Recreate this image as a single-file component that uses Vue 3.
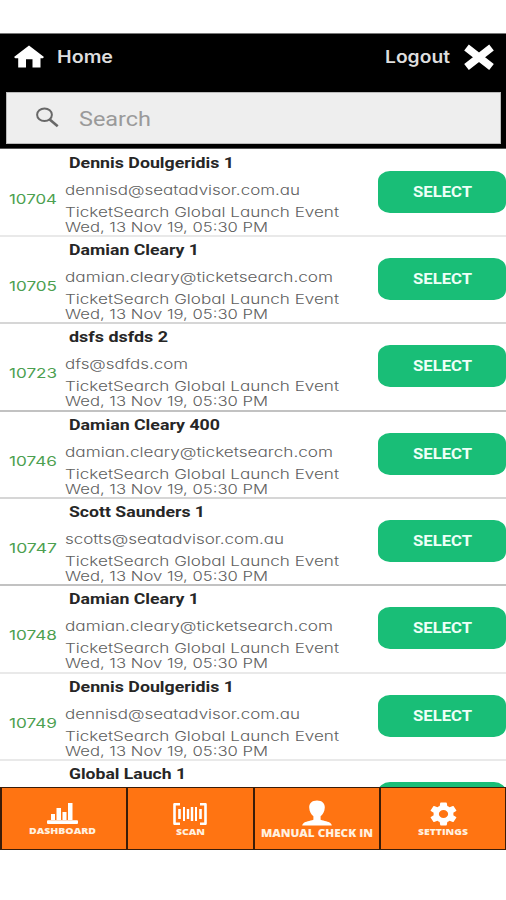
<script setup>
import { h } from 'vue'

// A single line of wide-set text, fitted to a given width.
const WideText = (props) =>
  h('svg', { width: props.w, height: props.h, class: 'wide-text' }, [
    h('text', { x: 0, y: props.base, textLength: props.w, lengthAdjust: 'spacingAndGlyphs' }, props.text)
  ])
WideText.props = ['text', 'w', 'h', 'base']

const damian = ['damian.cleary@ticketsearch.com', 268]
const dennis = ['dennisd@seatadvisor.com.au', 235]
const rows = [
  { id: '10704', name: 'Dennis Doulgeridis 1', nw: 165, mail: dennis, line: 'light' },
  { id: '10705', name: 'Damian Cleary 1', nw: 130, mail: damian, line: 'mid' },
  { id: '10723', name: 'dsfs dsfds 2', nw: 99, mail: ['dfs@sdfds.com', 123], line: 'dark' },
  { id: '10746', name: 'Damian Cleary 400', nw: 151, mail: damian, line: 'mid' },
  { id: '10747', name: 'Scott Saunders 1', nw: 136, mail: ['scotts@seatadvisor.com.au', 219], line: 'dark' },
  { id: '10748', name: 'Damian Cleary 1', nw: 130, mail: damian, line: 'light' },
  { id: '10749', name: 'Dennis Doulgeridis 1', nw: 165, mail: dennis, line: 'light' },
  { id: '', name: 'Global Lauch 1', nw: 117, mail: null, line: 'light' }
]
</script>

<template>
  <div class="screen">
    <header class="top">
      <div class="bar">
        <svg class="home" width="30" height="24" viewBox="0 0 30 24">
          <path d="M15 0.5 30 12l-1.2 1.2h-2.3V22.5h-8v-8.3h-6.5v8.3H4.2v-9.3H1.3L0 12Z" fill="#fff" />
        </svg>
        <WideText class="nav" text="Home" :w="56" :h="24" :base="17.5" />
        <WideText class="nav logout" text="Logout" :w="65" :h="24" :base="17.5" />
        <svg class="close" width="32" height="28" viewBox="0 0 32 28">
          <path d="M3.500 4.500 28.500 24M28.500 4.500 3.500 24" stroke="#fff" stroke-width="7.500" />
        </svg>
      </div>
      <div class="search">
        <svg width="24" height="22" viewBox="0 0 24 22" fill="none" stroke="#686868">
          <ellipse cx="8.500" cy="7.800" rx="7.400" ry="6.300" stroke-width="2" />
          <path d="M13.700 12.500 21.700 19.200" stroke-width="2.700" />
        </svg>
        <WideText class="placeholder" text="Search" :w="72" :h="24" :base="19.5" />
      </div>
    </header>

    <main class="list">
      <article v-for="r in rows" :key="r.id" class="row" :class="r.line">
        <div class="id"><WideText v-if="r.id" :text="r.id" :w="48" :h="16" :base="12" /></div>
        <div class="info">
          <WideText class="name" :text="r.name" :w="r.nw" :h="24" :base="18" />
          <template v-if="r.mail">
            <WideText :text="r.mail[0]" :w="r.mail[1]" :h="26" :base="20.5" />
            <WideText text="TicketSearch Global Launch Event" :w="274" :h="18" :base="16.8" />
            <WideText text="Wed, 13 Nov 19, 05:30 PM" :w="203" :h="18" :base="14" />
          </template>
        </div>
        <button class="select"><WideText v-if="r.id" text="SELECT" :w="59" :h="20" :base="15.2" /></button>
      </article>
    </main>

    <nav class="tabs">
      <div class="tab dashboard">
        <svg width="32" height="24" viewBox="0 0 32 24" fill="#fff">
          <path d="M4 13h4v6H4ZM9.5 7h4.500v12H9.500ZM15.500 11h4v8h-4ZM21 2h4.500v17H21Z" />
          <rect x="0" y="19.300" width="31" height="3.700" rx="1" />
        </svg>
        <WideText text="DASHBOARD" :w="67" :h="12" :base="8" />
      </div>
      <div class="tab">
        <svg width="36" height="24" viewBox="0 0 36 24" fill="none" stroke="#fff">
          <path d="M8 2.200H2.500V21.800H8M28 2.200h5.500V21.800H28" stroke-width="2.600" stroke-linejoin="round" />
          <path d="M7.500 7v10M28.500 7v10" stroke-width="2.600" />
          <path d="M12 5v14M24 5v14" stroke-width="2" />
          <path d="M16 7v10M20 5v14" stroke-width="2.400" />
        </svg>
        <WideText text="SCAN" :w="29" :h="12" :base="8" />
      </div>
      <div class="tab manual">
        <svg width="30" height="26" viewBox="0 0 30 26" fill="#fff">
          <path d="M15 .5c5 0 8 2.800 7.800 7-.2 4.400-2 7-4.200 8.800v3.500c3.500 1.200 8.200 2 9.700 3.200 1 .8 1.400 1.800 1.500 2.500H.2c.1-.7.5-1.700 1.500-2.500 1.500-1.200 6.200-2 9.700-3.200v-3.500C9.200 14.500 7.400 11.900 7.200 7.500 7 3.300 10 .5 15 .5Z" />
        </svg>
        <WideText text="MANUAL CHECK IN" :w="112" :h="12" :base="9.8" />
      </div>
      <div class="tab settings">
        <svg width="27" height="24" viewBox="1.8 1.6 20.4 20.8" preserveAspectRatio="none">
          <path fill="#fff" d="M19.430 12.980c.040-.320.070-.640.070-.980s-.030-.660-.070-.980l2.110-1.650c.190-.150.240-.420.120-.640l-2-3.460c-.120-.220-.390-.300-.610-.220l-2.490 1c-.520-.400-1.080-.730-1.690-.980l-.380-2.650C14.460 2.180 14.250 2 14 2h-4c-.250 0-.460.180-.490.420l-.380 2.650c-.610.250-1.170.590-1.690.980l-2.490-1c-.230-.090-.490 0-.610.220l-2 3.460c-.130.220-.070.490.120.640l2.110 1.650c-.040.320-.070.650-.070.980s.030.660.070.980l-2.110 1.650c-.190.150-.240.420-.120.640l2 3.460c.120.220.390.300.610.220l2.490-1c.520.400 1.080.730 1.690.980l.380 2.650c.030.240.240.420.490.420h4c.250 0 .460-.180.490-.420l.380-2.650c.610-.250 1.170-.590 1.690-.980l2.490 1c.230.090.490 0 .610-.220l2-3.460c.120-.220.070-.490-.120-.640ZM12 15.500A3.500 3.500 0 1 1 12 8.500a3.500 3.500 0 0 1 0 7Z" />
        </svg>
        <WideText text="SETTINGS" :w="50" :h="12" :base="8" />
      </div>
    </nav>
  </div>
</template>

<style>
body {
  background: #fff;
}
.wide-text {
  display: block;
  flex: none;
  overflow: visible;
  fill: currentColor;
}
</style>

<style scoped>
.screen {
  box-sizing: border-box;
  display: flex;
  flex-direction: column;
  height: 900px;
  padding: 33px 0 50px;
  overflow: hidden;
  font-family: Inter, "Liberation Sans", sans-serif;
}
.top {
  flex: none;
  box-sizing: border-box;
  height: 116px;
  padding: 0 5px 0 6px;
  background: #000;
  border-top: 1px solid #777;
  border-bottom: 1px solid #555;
}
.bar {
  display: flex;
  align-items: center;
  height: 58px;
  padding: 0 6px 0 8px;
  box-sizing: border-box;
}
.bar > * {
  margin-bottom: 12px;
}
.home {
  margin-right: 13px;
}
.nav {
  color: #dedede;
  font-size: 17px;
  font-weight: 600;
}
.logout {
  margin-left: auto;
  margin-right: 13px;
}
.search {
  display: flex;
  align-items: center;
  height: 52px;
  box-sizing: border-box;
  padding-left: 29px;
  gap: 19px;
  background: #eee;
  border: 1px solid #bbb;
}
.placeholder {
  color: #9a9a9a;
  font-family: Roboto, sans-serif;
  font-size: 20px;
}
.list {
  flex: 1;
  min-height: 0;
  padding-top: 0.6px;
  overflow: hidden;
}
.row {
  box-sizing: border-box;
  display: flex;
  height: 87.33px;
  border-bottom: 2px solid #e9e9e9;
}
.row.mid {
  border-color: #d6d6d6;
}
.row.dark {
  border-color: #c2c2c2;
}
.id {
  flex: none;
  width: 56px;
  padding: 42px 0 0 9px;
  box-sizing: border-box;
  color: #4c9f50;
  font-size: 13px;
}
.info {
  flex: 1;
  padding-left: 9px;
  color: #606060;
  font-size: 13.3px;
  font-weight: 350;
  font-feature-settings: "cv11";
}
.name {
  margin-left: 4px;
  color: #262626;
  font-family: Roboto, sans-serif;
  font-size: 14.8px;
  font-weight: 700;
}
.select {
  flex: none;
  display: flex;
  align-items: center;
  justify-content: center;
  width: 128px;
  height: 42px;
  margin: 21px 0 0;
  padding: 0;
  border: 0;
  border-radius: 12px / 10px;
  background: #19be77;
  color: #effff7;
  font: 700 14.5px Roboto, sans-serif;
}
.tabs {
  flex: none;
  box-sizing: border-box;
  display: grid;
  grid-template-columns: repeat(4, 1fr);
  gap: 2px;
  height: 63px;
  padding: 1px 1px 1px 2px;
  background: #3a1c08;
}
.tab {
  display: flex;
  flex-direction: column;
  align-items: center;
  padding-top: 14px;
  background: #ff7412;
  color: #fff1e0;
  font: 800 9.5px "Open Sans", sans-serif;
}
.tab > svg:first-child {
  flex: none;
}
.tab > svg:last-child {
  margin-top: 1px;
}
.dashboard {
  padding-top: 13px;
  padding-right: 3px;
}
.settings {
  padding-left: 1px;
}
.manual {
  padding-top: 12px;
  font-size: 11px;
}
</style>
